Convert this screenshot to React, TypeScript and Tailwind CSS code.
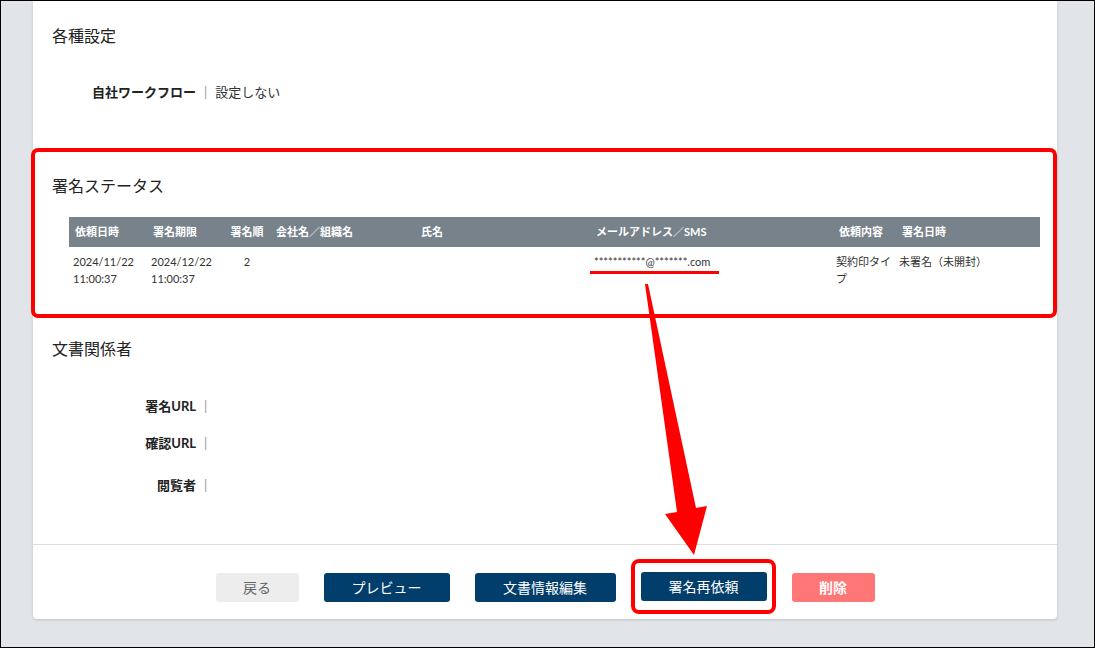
import React from "react";

const FONT = { fontFamily: '"Lato", "Noto Sans CJK JP", sans-serif' };

function Field({ label, value, className = "" }: { label: string; value?: string; className?: string }) {
  return (
    <div className={`flex items-center h-[20px] leading-[20px] ${className}`}>
      <div className="w-[144px] text-right text-[13px] font-bold text-[#222]">{label}</div>
      <div className="ml-[8px] text-[13px] text-[#999]">|</div>
      {value && <div className="ml-[8px] text-[13px] text-[#333]">{value}</div>}
    </div>
  );
}

export default function App() {
  const headers = [
    { t: "依頼日時", c: "pl-[6px]" },
    { t: "署名期限", c: "pl-[6px]" },
    { t: "署名順", c: "text-center" },
    { t: "会社名／組織名", c: "pl-[6px]" },
    { t: "氏名", c: "pl-[6px]" },
    { t: "メールアドレス／SMS", c: "pl-[6px]" },
    { t: "依頼内容", c: "pl-[6px]" },
    { t: "署名日時", c: "pl-[6px]" },
  ];
  return (
    <div
      className="relative w-[1095px] h-[648px] overflow-hidden border border-black bg-[#e1e5e9]"
      style={FONT}
    >
      <div className="ml-[32px] w-[1024px] bg-white rounded-b-[4px] shadow-[0_1px_3px_rgba(0,0,0,0.15)]">
        <div className="pl-[19px] pt-[23px] pb-[49px]">
          <div className="h-[24px] leading-[24px] text-[16px] text-[#222]">各種設定</div>
          <Field className="mt-[34px]" label="自社ワークフロー" value="設定しない" />
          <div className="mt-[72px] h-[24px] leading-[24px] text-[16px] text-[#222]">署名ステータス</div>
          <div className="mt-[19px] ml-[17px] w-[971px]">
            <div className="grid grid-cols-[78px_77px_46px_145px_175px_243px_63px_144px] h-[30px] items-center bg-[#78828a] text-[11px] font-bold text-white">
              {headers.map((h) => (
                <div key={h.t} className={`${h.c} whitespace-nowrap`}>
                  {h.t}
                </div>
              ))}
            </div>
            <div className="grid grid-cols-[78px_77px_46px_145px_175px_243px_63px_144px] pt-[6px] text-[11px] leading-[17px] text-[#333]">
              <div className="pl-[4px]">
                2024/11/22
                <br />
                11:00:37
              </div>
              <div className="pl-[4px]">
                2024/12/22
                <br />
                11:00:37
              </div>
              <div className="text-center">2</div>
              <div></div>
              <div></div>
              <div className="pl-[4px]">***********@*******.com</div>
              <div className="pl-[3px] pr-[3px]">契約印タイプ</div>
              <div className="pl-[3px]">未署名（未開封）</div>
            </div>
          </div>
          <div className="mt-[50px] h-[24px] leading-[24px] text-[16px] text-[#222]">文書関係者</div>
          <Field className="mt-[35px]" label="署名URL" />
          <Field className="mt-[17px]" label="確認URL" />
          <Field className="mt-[22px]" label="閲覧者" />
        </div>
        <div className="border-t border-[#dddddd] pt-[28px] pb-[17px] flex justify-center items-start gap-[25px] text-[14px]">
          <button className="w-[83px] h-[29px] rounded-[3px] bg-[#ededed] text-[#666]">戻る</button>
          <button className="w-[126px] h-[29px] rounded-[3px] bg-[#023e6b] text-white">プレビュー</button>
          <button className="w-[141px] h-[29px] rounded-[3px] bg-[#023e6b] text-white">文書情報編集</button>
          <button className="w-[126px] h-[29px] -mt-[1px] rounded-[3px] bg-[#023e6b] text-white">署名再依頼</button>
          <button className="w-[83px] h-[29px] rounded-[3px] bg-[#ff7676] text-white font-bold">削除</button>
        </div>
      </div>

      {/* annotations */}
      <div className="absolute left-[30px] top-[147px] w-[1026px] h-[170px] border-[4px] border-[#ff0000] rounded-[7px]" />
      <div className="absolute left-[589px] top-[270px] w-[129px] h-[3px] bg-[#ff0000]" />
      <div className="absolute left-[630px] top-[558px] w-[145px] h-[55px] border-[4px] border-[#ff0000] rounded-[8px]" />
      <svg className="absolute left-0 top-0" width="1095" height="648" viewBox="0 0 1095 648">
        <polygon
          points="645,284 648,284 696,508 707,506 694,555 665,514 677,512"
          fill="#ff0000"
          transform="translate(-1,-1)"
        />
      </svg>
    </div>
  );
}
